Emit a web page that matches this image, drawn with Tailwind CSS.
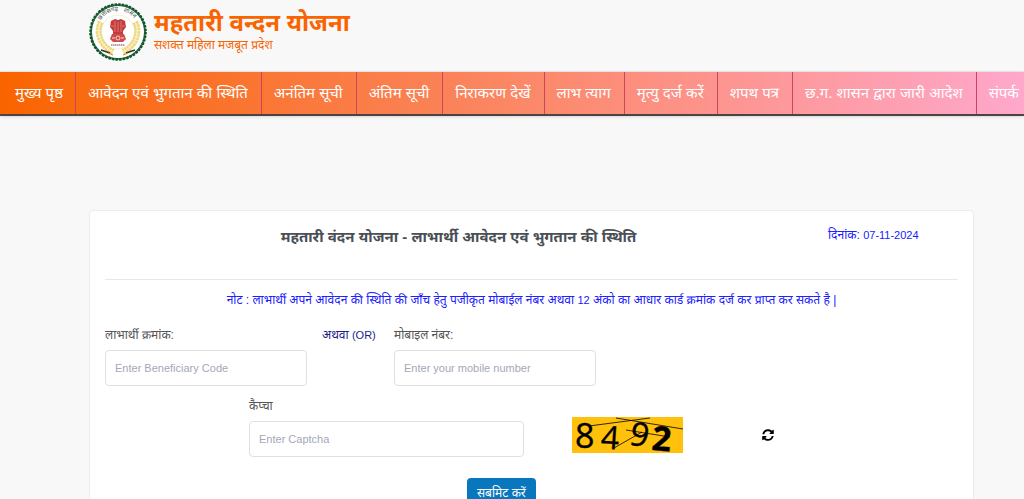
<!DOCTYPE html>
<html lang="hi">
<head>
  <meta charset="UTF-8">
  <meta name="viewport" content="width=device-width, initial-scale=1.0">
  <title>महतारी वन्दन योजना</title>
  <script src="https://cdn.jsdelivr.net/npm/@tailwindcss/browser@4"></script>
</head>
<body class="bg-[#f8f8f8] min-h-screen overflow-x-hidden font-['Liberation_Sans','Noto_Sans_Devanagari','Noto_Sans',sans-serif] text-[12px] text-[#555]">
  <header class="flex items-start gap-[7px] h-[71px] pl-[89px] pt-[3px] text-[#f96400]">
    <!-- State emblem -->
    <svg class="w-[58px] h-[58px] shrink-0" viewBox="0 0 58 58" fill="none">
      <circle cx="29" cy="29" r="27" fill="#fff" stroke="#2f7a4a" stroke-width="2"/>
      <circle cx="29" cy="29" r="27.5" stroke="#14552d" stroke-width="2.6" stroke-dasharray="2.4 1.2"/>
      <circle cx="29" cy="29" r="17" stroke="#eee3b0" stroke-width=".6"/>
      <path id="arc" d="M11 18A21 21 0 0 1 47 18"/>
      <text font-size="6" fill="#444"><textPath href="#arc" startOffset="1">छत्तीसगढ़ &#160; शासन</textPath></text>
      <path d="M12 19C7 28 10 42 24 49M46 19C51 28 48 42 34 49" stroke="#ecd77a" stroke-width="6" stroke-dasharray="2.6 .5"/>
      <path d="M12 19C7 28 10 42 24 49M46 19C51 28 48 42 34 49" stroke="#f8efc0" stroke-width="1.5"/>
      <path d="M12 47l9 3M46 47l-9 3" stroke="#333" stroke-width="1.6"/>
      <path d="M19 50l5 2M39 50l-5 2" stroke="#e38436" stroke-width="1.2"/>
      <path d="M22 18l4-2 3 1 3-1 4 2 1 6-3 4v3H24v-3l-3-4z" fill="#c43c3a"/>
      <path d="M26 18v11M29 19v10M32 18v11M22 23h3M33 23h3" stroke="#efa39b" stroke-width=".6"/>
      <path d="M23 31h12l2 5-3 3H24l-3-3z" fill="#cf4a48"/>
      <circle cx="29" cy="35" r="2" stroke="#fff" stroke-width=".7"/>
      <path d="M23 35h3M32 35h3" stroke="#fff" stroke-width=".8"/>
      <path d="M22 42h14" stroke="#744" stroke-width="1.2" stroke-dasharray="1.5 .5"/>
    </svg>
    <div>
      <h1 class="text-2xl leading-10 font-bold">महतारी वन्दन योजना</h1>
      <p class="leading-1">सशक्त महिला मजबूत प्रदेश</p>
    </div>
  </header>

  <nav class="flex h-[45px] border-t border-t-[#e4e4e4] border-b-2 border-b-[#4a4444] bg-linear-to-r/srgb from-[#f96400] via-[#fb8765] via-50% to-[#ffa8cc] text-[15px] text-white whitespace-nowrap shadow-sm">
    <a href="#" class="flex items-center shrink-0 pl-[15px] pr-3 border-r border-[#c94560]">मुख्य पृष्ठ</a>
    <a href="#" class="flex items-center shrink-0 pl-3 pr-[13px] border-r border-[#c94560]">आवेदन एवं भुगतान की स्थिति</a>
    <a href="#" class="flex items-center shrink-0 pl-3 pr-[13px] border-r border-[#c94560]">अनंतिम सूची</a>
    <a href="#" class="flex items-center shrink-0 pl-3 pr-[13px] border-r border-[#c94560]">अंतिम सूची</a>
    <a href="#" class="flex items-center shrink-0 pl-3 pr-[13px] border-r border-[#c94560]">निराकरण देखें</a>
    <a href="#" class="flex items-center shrink-0 pl-3 pr-[13px] border-r border-[#c94560]">लाभ त्याग</a>
    <a href="#" class="flex items-center shrink-0 pl-3 pr-[13px] border-r border-[#c94560]">मृत्यु दर्ज करें</a>
    <a href="#" class="flex items-center shrink-0 pl-3 pr-[13px] border-r border-[#c94560]">शपथ पत्र</a>
    <a href="#" class="flex items-center shrink-0 pl-3 pr-[13px] border-r border-[#c94560]">छ.ग. शासन द्वारा जारी आदेश</a>
    <a href="#" class="flex items-center shrink-0 pl-3">संपर्क</a>
  </nav>

  <main class="mt-[94px] ml-[89px] mr-[50px] px-[15px] pb-8 bg-white border border-[#ececec] rounded">
    <div class="grid grid-cols-[1fr_130px] h-[68px] pt-3">
      <h2 class="text-[15px] leading-7 font-bold text-center text-[#4a4f55] pr-4">महतारी वंदन योजना - लाभार्थी आवेदन एवं भुगतान की स्थिति</h2>
      <p class="leading-6 text-[#2020ff]">दिनांक: <span class="text-[11px]">07-11-2024</span></p>
    </div>
    <hr class="border-[#e8e8e8]">
    <p class="mt-2 leading-6 text-center text-[#2020ff]">नोट : लाभार्थी अपने आवेदन की स्थिति की जाँच हेतु पजीकृत मोबाईल नंबर अथवा <span class="text-[11px]">12</span> अंको का आधार कार्ड क्रमांक दर्ज कर प्राप्त कर सकते है |</p>

    <form>
      <div class="flex items-start mt-2">
        <div class="w-[202px]">
          <label for="code" class="block leading-[30px]">लाभार्थी क्रमांक:</label>
          <input id="code" type="text" placeholder="Enter Beneficiary Code" class="block w-full h-9 px-[9px] text-[11px] bg-white border border-[#dde1e4] rounded placeholder:text-[#a3a8b8]">
        </div>
        <span class="w-[87px] pl-[15px] leading-[30px] text-[#1c1c8c]">अथवा <span class="text-[11px]">(OR)</span></span>
        <div class="w-[202px]">
          <label for="mobile" class="block leading-[30px]">मोबाइल नंबर:</label>
          <input id="mobile" type="text" placeholder="Enter your mobile number" class="block w-full h-9 px-[9px] text-[11px] bg-white border border-[#dde1e4] rounded placeholder:text-[#a3a8b8]">
        </div>
      </div>

      <div class="flex items-end mt-[5px] pl-[144px]">
        <div class="w-[275px]">
          <label for="captcha" class="block leading-[30px]">कैप्चा</label>
          <input id="captcha" type="text" placeholder="Enter Captcha" class="block w-full h-9 px-[9px] text-[11px] bg-white border border-[#dde1e4] rounded placeholder:text-[#a3a8b8]">
        </div>
        <!-- Captcha image -->
        <svg class="w-[111px] h-9 ml-12 mb-1 bg-[#ffc10c] overflow-visible font-['Open_Sans',sans-serif]" viewBox="0 0 111 36" fill="#000" stroke="#000">
          <text x="3" y="31" font-size="34" stroke-width=".4">8</text>
          <text x="29" y="32" font-size="32" stroke-width=".3" transform="rotate(4 38 20)">4</text>
          <text x="58" y="29" font-size="33" stroke-width=".4" transform="rotate(12 67 18)">9</text>
          <text x="80" y="34" font-size="34" font-weight="bold" stroke-width=".4" transform="rotate(5 90 22)">2</text>
          <path d="M17 9L78 1M44 1L111 12M54 13L98 20M42 31L70 15" stroke-width=".8"/>
        </svg>
        <button type="button" aria-label="Refresh" class="ml-[79px] mb-4 text-black">
          <svg class="w-3 h-3" viewBox="0 0 512 512" fill="currentColor"><path d="M371 141A162 162 0 0 0 98 216c-1 5-6 9-12 9H29c-7 0-13-7-12-14C38 94 137 8 256 8c66 0 127 26 171 69l35-35c15-15 41-4 41 17v134c0 13-11 24-24 24H345c-21 0-32-26-17-41zM32 296h134c21 0 32 26 17 41l-42 42a162 162 0 0 0 273-75c1-5 6-9 12-9h57c7 0 13 7 12 14C474 426 375 504 256 504c-66 0-127-26-171-69l-36 35C34 485 8 474 8 453V320c0-13 11-24 24-24z"/></svg>
        </button>
      </div>

      <button type="submit" class="block mt-[21px] ml-[362px] h-[30px] px-[10px] rounded-sm bg-[#0877bd] text-white">सबमिट करें</button>
    </form>
  </main>
</body>
</html>
